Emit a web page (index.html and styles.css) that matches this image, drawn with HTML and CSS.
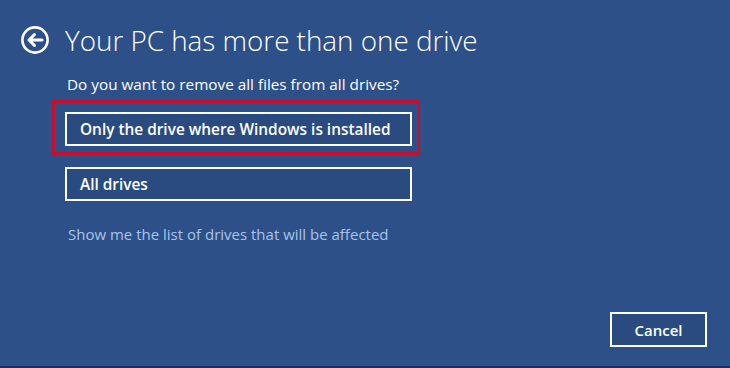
FILE: index.html
```html
<!DOCTYPE html>
<html lang="en">
<head>
    <meta charset="UTF-8">
    <meta name="viewport" content="width=device-width, initial-scale=1.0">
    <title>Reset this PC</title>
    <link rel="stylesheet" href="styles.css">
</head>
<body>
    <div class="page">
        <div class="main">
            <div class="header">
                <svg class="back" width="28" height="28" viewBox="0 0 28 28">
                    <circle cx="14" cy="14" r="12.6" fill="none" stroke="#fff" stroke-width="2.6"/>
                    <path d="M21 14 H8 M13.5 8.5 L8 14 L13.5 19.5" fill="none" stroke="#fff" stroke-width="3" stroke-linecap="round" stroke-linejoin="round"/>
                </svg>
                <h1 class="title">Your PC has more than one drive</h1>
            </div>
            <div class="content">
                <p class="question">Do you want to remove all files from all drives?</p>
                <div class="highlight">
                    <button class="option">Only the drive where Windows is installed</button>
                </div>
                <button class="option">All drives</button>
                <a class="link" href="#">Show me the list of drives that will be affected</a>
            </div>
        </div>
        <div class="footer">
            <button class="cancel">Cancel</button>
        </div>
    </div>
</body>
</html>
```

FILE: styles.css
```css
html, body {
    margin: 0;
    height: 100%;
}
body {
    background-color: #2c5087;
    font-family: "Open Sans", Arial, sans-serif;
    color: #fff;
}
.page {
    height: 100%;
    box-sizing: border-box;
    border-bottom: 2px solid #1a2d68;
    display: flex;
    flex-direction: column;
}
.main {
    flex: 1;
}
.header {
    display: flex;
    align-items: center;
    padding: 26px 0 0 21px;
    height: 28px;
}
.back {
    flex: none;
}
.title {
    margin: 0 0 0 16px;
    font-size: 27.8px;
    font-weight: 300;
    line-height: 28px;
}
.content {
    padding-left: 65px;
}
.question {
    margin: 20px 0 0 2px;
    font-size: 15.3px;
    line-height: 20px;
}
.highlight {
    margin: 6px 0 0 -13px;
    padding: 9px 5px 6px 10px;
    border: 3px solid #c8102e;
    width: 347px;
}
.option {
    display: block;
    width: 347px;
    height: 34px;
    padding: 0 0 0 13px;
    box-sizing: border-box;
    background-color: #2a4b80;
    border: 2px solid #fff;
    color: #fff;
    font-family: "Open Sans", Arial, sans-serif;
    font-size: 15.4px;
    font-weight: 600;
    text-align: left;
}
.highlight + .option {
    margin-top: 12px;
}
.link {
    display: block;
    margin: 23px 0 0 3px;
    color: #a9c3ec;
    font-size: 15px;
    text-decoration: none;
}
.footer {
    display: flex;
    justify-content: flex-end;
    padding: 0 23px 19px 0;
}
.cancel {
    width: 97px;
    height: 35px;
    background-color: #2a4b80;
    border: 2px solid #fff;
    color: #fff;
    font-family: "Open Sans", Arial, sans-serif;
    font-size: 15px;
    font-weight: 600;
}
```
